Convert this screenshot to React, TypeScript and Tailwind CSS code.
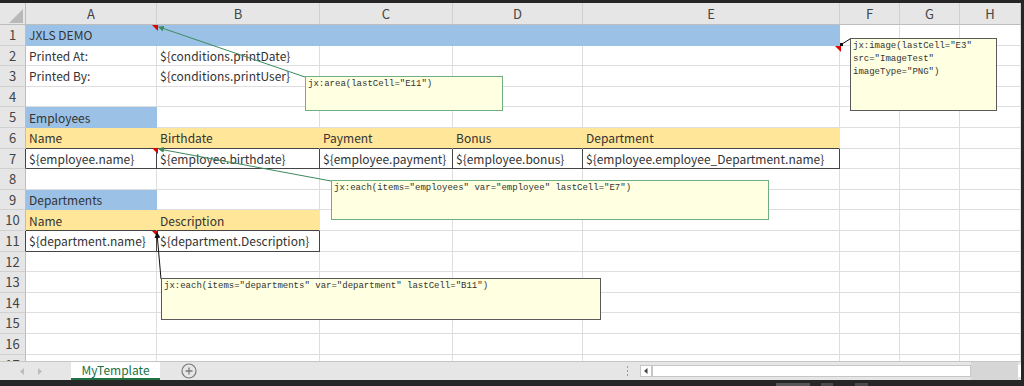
import React from "react";

type Kind = "plain" | "blue" | "yellow" | "box";
type Cell = { text?: string; kind?: Kind };

const COLS = ["A", "B", "C", "D", "E", "F", "G", "H"];

const ROWS: Cell[][] = [
  [
    { text: "JXLS DEMO", kind: "blue" },
    { kind: "blue" },
    { kind: "blue" },
    { kind: "blue" },
    { kind: "blue" },
  ],
  [{ text: "Printed At:" }, { text: "${conditions.printDate}" }],
  [{ text: "Printed By:" }, { text: "${conditions.printUser}" }],
  [],
  [{ text: "Employees", kind: "blue" }],
  [
    { text: "Name", kind: "yellow" },
    { text: "Birthdate", kind: "yellow" },
    { text: "Payment", kind: "yellow" },
    { text: "Bonus", kind: "yellow" },
    { text: "Department", kind: "yellow" },
  ],
  [
    { text: "${employee.name}", kind: "box" },
    { text: "${employee.birthdate}", kind: "box" },
    { text: "${employee.payment}", kind: "box" },
    { text: "${employee.bonus}", kind: "box" },
    { text: "${employee.employee_Department.name}", kind: "box" },
  ],
  [],
  [{ text: "Departments", kind: "blue" }],
  [
    { text: "Name", kind: "yellow" },
    { text: "Description", kind: "yellow" },
  ],
  [
    { text: "${department.name}", kind: "box" },
    { text: "${department.Description}", kind: "box" },
  ],
  [],
  [],
  [],
  [],
  [],
  [],
];

const cellClass: Record<Kind, string> = {
  plain: "border-r border-b border-[#dedede] bg-white",
  blue: "border-r border-b border-[#9bc2e6] bg-[#9bc2e6]",
  yellow: "border-r border-b border-[#ffe699] border-b-[#454545] bg-[#ffe699]",
  box: "border-r border-b border-[#454545] bg-white",
};

function Note({
  className,
  lines,
}: {
  className: string;
  lines: string[];
}) {
  return (
    <div
      className={
        "absolute bg-[#ffffe1] px-[2px] pt-[1px] font-['Liberation_Mono',monospace] text-[9px] leading-[13px] text-[#333] " +
        className
      }
    >
      {lines.map((l) => (
        <div key={l} className="whitespace-pre">
          {l}
        </div>
      ))}
    </div>
  );
}

export default function App() {
  return (
    <div className="relative flex h-[386px] w-[1024px] flex-col overflow-hidden bg-[#262626] pt-[3px] pr-[3px] font-['Noto_Sans_CJK_JP',sans-serif]">
      {/* Sheet */}
      <div className="h-[358px] overflow-hidden bg-white">
        <div className="grid grid-cols-[26px_131px_163px_133px_130px_257px_60px_60px_61px] grid-rows-[22px_repeat(17,20.6px)]">
          {/* corner */}
          <div className="relative border-r border-b border-[#bdbdbd] bg-[#e6e6e6]">
            <svg className="absolute inset-0" width="26" height="22">
              <path d="M23 6 L23 20 L9 20 Z" fill="#b9b9b9" />
            </svg>
          </div>
          {COLS.map((c) => (
            <div
              key={c}
              className="flex items-center justify-center border-r border-b border-r-[#d0d0d0] border-b-[#bdbdbd] bg-[#e6e6e6] text-[13px] text-[#444]"
            >
              {c}
            </div>
          ))}

          {ROWS.map((row, ri) => {
            const boxed = row.some((c) => c.kind === "box");
            return (
              <React.Fragment key={ri}>
                <div
                  className={
                    "flex items-center justify-center border-r border-b border-b-[#d0d0d0] bg-[#e6e6e6] text-[13px] text-[#444] " +
                    (boxed ? "border-r-[#454545]" : "border-r-[#bdbdbd]")
                  }
                >
                  {ri + 1}
                </div>
                {COLS.map((c, ci) => {
                  const cell = row[ci] ?? {};
                  const kind = cell.kind ?? "plain";
                  return (
                    <div
                      key={c}
                      className={
                        "flex items-center whitespace-nowrap px-[3px] pt-[1px] text-[12px] text-[#333] " +
                        cellClass[kind]
                      }
                    >
                      {cell.text}
                    </div>
                  );
                })}
              </React.Fragment>
            );
          })}
        </div>
      </div>

      {/* Sheet tabs + scrollbar */}
      <div className="flex h-[19px] border-t border-[#c6c6c6] bg-[#e6e6e6]">
        <div className="flex w-[71px] items-center gap-[13px] pl-[20px]">
          <svg width="5" height="7">
            <path d="M4 0 L0 3.5 L4 7 Z" fill="#bcbcbc" />
          </svg>
          <svg width="5" height="7">
            <path d="M0 0 L4 3.5 L0 7 Z" fill="#bcbcbc" />
          </svg>
        </div>
        <div className="flex w-[89px] items-center justify-center border-b-2 border-[#217346] bg-white text-[12px] text-[#217346]">
          MyTemplate
        </div>
        <div className="flex w-[58px] items-center justify-center">
          <svg width="16" height="16" viewBox="0 0 16 16">
            <circle cx="8" cy="8" r="7" fill="none" stroke="#7a7a7a" strokeWidth="1.2" />
            <path d="M8 4.5 V11.5 M4.5 8 H11.5" stroke="#7a7a7a" strokeWidth="1.3" />
          </svg>
        </div>
        <div className="flex-1" />
        <div className="flex w-[18px] flex-col items-center justify-center gap-[2px] pr-[8px]">
          <div className="h-[2px] w-[1px] bg-[#999]" />
          <div className="h-[2px] w-[1px] bg-[#999]" />
          <div className="h-[2px] w-[1px] bg-[#999]" />
        </div>
        <div className="flex h-[12px] w-[12px] items-center justify-center self-center border border-[#c6c6c6] bg-white">
          <svg width="4" height="6">
            <path d="M3.5 0 L0 3 L3.5 6 Z" fill="#444" />
          </svg>
        </div>
        <div className="h-[12px] w-[319px] self-center border border-[#c6c6c6] bg-white" />
        <div className="w-[47px] bg-[#d6d6d6]" />
        <div className="h-[12px] w-[3px] self-center bg-white" />
      </div>

      {/* status bar edge */}
      <div className="flex h-[6px] items-end pl-[776px]">
        <div className="h-[3px] w-[34px] bg-[#555]" />
        <div className="ml-[11px] h-[3px] w-[12px] bg-[#4a4a4a]" />
        <div className="ml-[22px] h-[3px] w-[13px] bg-[#4a4a4a]" />
      </div>

      {/* comment connectors */}
      <svg className="pointer-events-none absolute inset-0" width="1024" height="386">
        <defs>
          <marker id="ag" markerWidth="6" markerHeight="6" refX="5" refY="3" orient="auto">
            <path d="M0 0 L6 3 L0 6 Z" fill="#3d8a5c" />
          </marker>
          <marker id="ak" markerWidth="6" markerHeight="6" refX="5" refY="3" orient="auto">
            <path d="M0 0 L6 3 L0 6 Z" fill="#111" />
          </marker>
        </defs>
        {/* red comment indicators */}
        <path d="M152 25 L158 25 L158 31 Z" fill="#e00000" />
        <path d="M835 46 L841 46 L841 52 Z" fill="#e00000" />
        <path d="M152 148 L158 148 L158 154 Z" fill="#e00000" />
        <path d="M152 231 L158 231 L158 237 Z" fill="#e00000" />
        <line x1="305" y1="77" x2="159" y2="27" stroke="#3d8a5c" strokeWidth="1" markerEnd="url(#ag)" />
        <line x1="331" y1="181" x2="159" y2="149" stroke="#3d8a5c" strokeWidth="1" markerEnd="url(#ag)" />
        <line x1="161" y1="279" x2="157" y2="233" stroke="#111" strokeWidth="1" markerEnd="url(#ak)" />
        <line x1="850" y1="39" x2="842" y2="44" stroke="#111" strokeWidth="1" />
        <rect x="840" y="43" width="3" height="3" fill="#111" />
      </svg>

      {/* comments */}
      <Note
        className="left-[305px] top-[76px] h-[35px] w-[198px] border border-[#6fae84]"
        lines={['jx:area(lastCell="E11")']}
      />
      <Note
        className="left-[850px] top-[38px] h-[73px] w-[147px] border border-[#5a5a5a]"
        lines={['jx:image(lastCell="E3"', 'src="ImageTest"', 'imageType="PNG")']}
      />
      <Note
        className="left-[331px] top-[180px] h-[40px] w-[438px] border border-[#6fae84]"
        lines={['jx:each(items="employees" var="employee" lastCell="E7")']}
      />
      <Note
        className="left-[161px] top-[278px] h-[42px] w-[440px] border border-[#5a5a5a]"
        lines={['jx:each(items="departments" var="department" lastCell="B11")']}
      />
    </div>
  );
}
